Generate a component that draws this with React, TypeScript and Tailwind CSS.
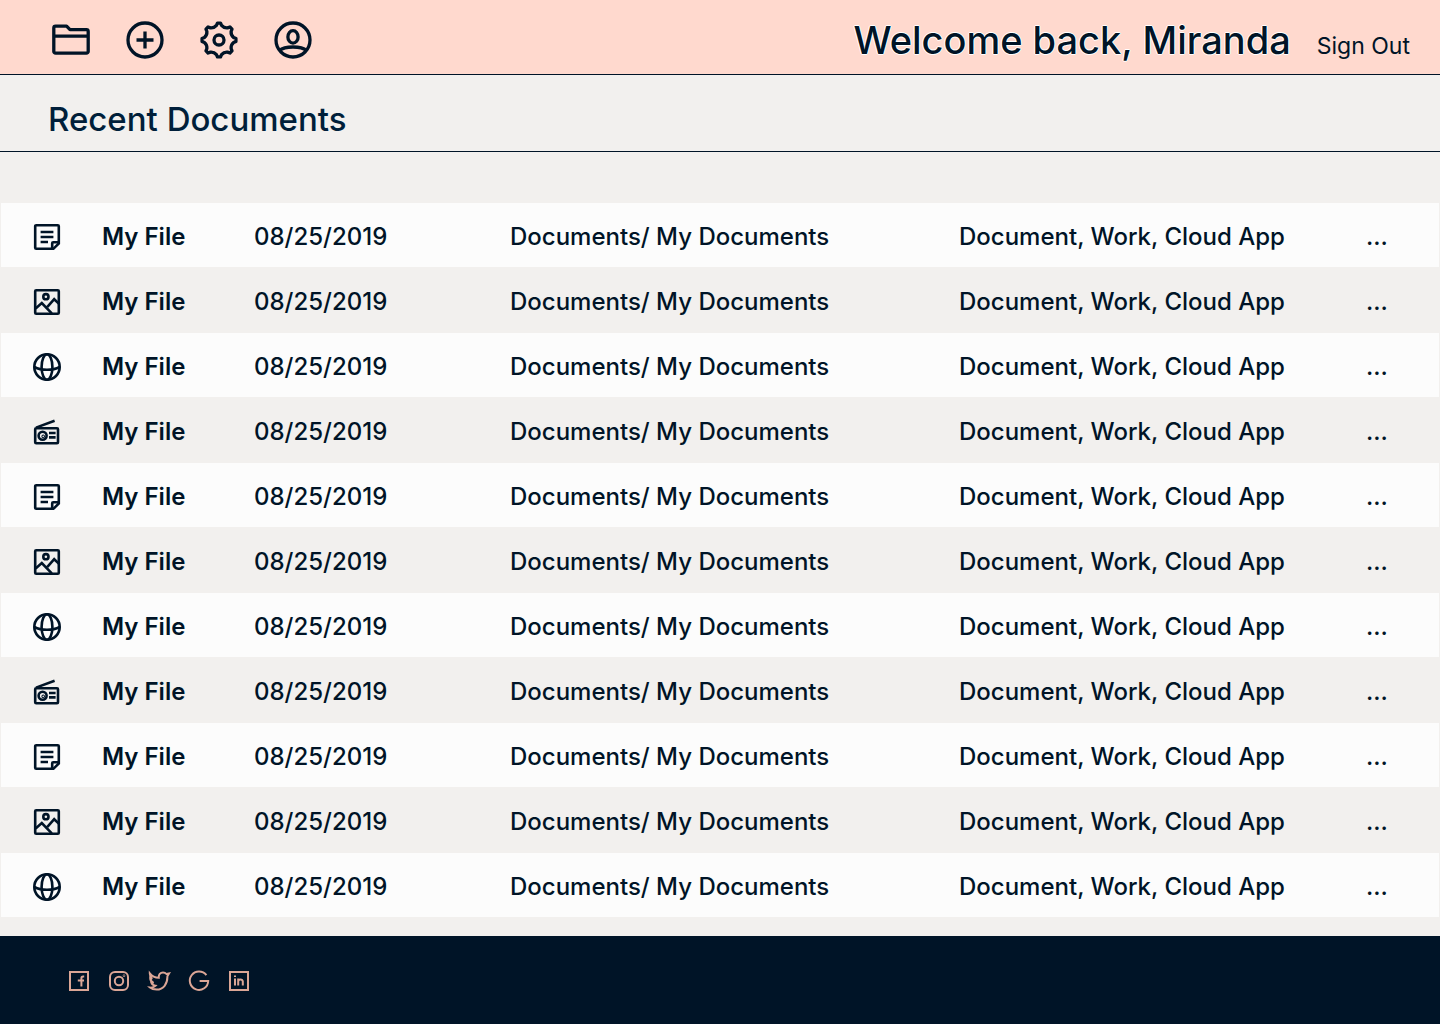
import type { ReactNode } from "react";

type FileKind = "note" | "image" | "web" | "audio";

const kinds: FileKind[] = ["note", "image", "web", "audio"];

const files = Array.from({ length: 11 }, (_, i) => ({
  id: i,
  kind: kinds[i % 4],
  name: "My File",
  date: "08/25/2019",
  location: "Documents/ My Documents",
  tags: "Document, Work, Cloud App",
}));

/* Outline of an eight-toothed cog centred on (20, 20). */
function gearPath() {
  const at = (deg: number, r: number) => {
    const a = (deg * Math.PI) / 180;
    return `${(20 + r * Math.sin(a)).toFixed(2)} ${(20 - r * Math.cos(a)).toFixed(2)}`;
  };
  let d = `M${at(-5, 17)}`;
  for (let i = 0; i < 8; i++) {
    const t = i * 45;
    d += `L${at(t + 5, 17)}L${at(t + 10, 14.8)}Q${at(t + 22.5, 12.8)} ${at(t + 35, 14.8)}L${at(t + 40, 17)}`;
  }
  return d + "Z";
}

function NavIcon({ children }: { children: ReactNode }) {
  return (
    <svg viewBox="0 0 40 40" className="size-10" fill="none" stroke="currentColor" strokeWidth="3.3" strokeLinejoin="round" aria-hidden="true">
      {children}
    </svg>
  );
}

const navItems = [
  {
    label: "Files",
    icon: (
      <NavIcon>
        <path d="M2.8 8a1.8 1.8 0 0 1 1.8-1.8H15.6L19 9.6H35.4A1.8 1.8 0 0 1 37.2 11.4V31.4A1.8 1.8 0 0 1 35.4 33.2H4.6A1.8 1.8 0 0 1 2.8 31.4ZM2.8 16.2H37.2" />
      </NavIcon>
    ),
  },
  {
    label: "New",
    icon: (
      <NavIcon>
        <circle cx="20" cy="20" r="17" />
        <path d="M20 11.5V28.5M11.5 20H28.5" />
      </NavIcon>
    ),
  },
  {
    label: "Settings",
    icon: (
      <NavIcon>
        <path d={gearPath()} />
        <circle cx="20" cy="20" r="5" />
      </NavIcon>
    ),
  },
  {
    label: "Account",
    icon: (
      <NavIcon>
        <circle cx="20" cy="20" r="17" />
        <ellipse cx="20" cy="16.9" rx="5.1" ry="6.2" />
        <path d="M6.6 30.4C9 28.2 13.6 27 20 27S31 28.2 33.4 30.4" />
      </NavIcon>
    ),
  },
];

const fileDrawings: Record<FileKind, ReactNode> = {
  note: (
    <>
      <path d="M3.2 2.2H24.8A1 1 0 0 1 25.8 3.2V20.4L20.4 25.8H3.2A1 1 0 0 1 2.2 24.8V3.2A1 1 0 0 1 3.2 2.2Z" />
      <path d="M19.2 25V20.2A1 1 0 0 1 20.2 19.2H25M7.6 9H20.4M7.6 14H20.4M7.6 19H15" />
    </>
  ),
  image: (
    <>
      <rect x="2.2" y="2.2" width="23.6" height="23.6" rx="1" />
      <circle cx="12.9" cy="8.7" r="2.6" />
      <path d="M2.6 20.4L8.8 15L18.8 25.4M14.4 18.8L21.2 11.2L25.8 15.6" />
    </>
  ),
  web: (
    <>
      <circle cx="14" cy="14" r="12.7" />
      <ellipse cx="14" cy="14" rx="5.4" ry="12.7" />
      <path d="M1.4 14C5 16 9.2 16.8 14 16.8S23 16 26.6 14" />
    </>
  ),
  audio: (
    <>
      <rect x="2.2" y="10.2" width="22.8" height="15" rx="1" />
      <circle cx="9.6" cy="17.8" r="4" />
      <path d="M3 9.6L21.6 2.8M16 15H22.6M16 19.4H22.6" />
      <circle cx="10.2" cy="18.4" r="0.5" />
    </>
  ),
};

const socials = [
  {
    label: "Facebook",
    icon: (
      <>
        <rect x="3" y="3" width="18" height="18" />
        <path d="M17.2 7.4H16.2Q14.4 7.4 14.4 9.2V17.6M10.8 11.6H17" />
      </>
    ),
  },
  {
    label: "Instagram",
    icon: (
      <>
        <rect x="3" y="3" width="18" height="18" rx="5" />
        <circle cx="12" cy="12" r="4.2" />
        <circle cx="17" cy="6.8" r="0.3" />
      </>
    ),
  },
  {
    label: "Twitter",
    icon: (
      <path d="M2.8 4.4C5.2 7.6 8.2 8.8 11.8 8.8C11.4 5.4 13.4 3.4 16 3.4C17.4 3.4 18.6 4 19.4 5L22 4.4L20.4 7.2C20.6 15 16.4 20.6 9.6 20.6C6.8 20.6 4.4 19.8 3 18.6C5.2 18.8 7 18.2 8.4 16.8C6.4 16.6 5 15.6 4.4 13.8H6.6C4.4 12.8 3.2 11.2 3.2 9.2L5.2 9.8C3.4 8.2 2.8 6.6 2.8 4.4Z" />
    ),
  },
  {
    label: "Google",
    icon: <path d="M19.4 6.2A9.2 9.2 0 1 0 21.2 12H12.6" />,
  },
  {
    label: "LinkedIn",
    icon: (
      <>
        <rect x="3" y="3" width="18" height="18" />
        <path d="M8 9.6V16.4M8 6.4V8M11.2 16.4V9.6M11.2 12.4Q11.2 10.4 13.4 10.4T15.8 12.4V16.4" />
      </>
    ),
  },
];

export default function App() {
  return (
    <div className="flex min-h-screen flex-col bg-[#f2f0ee] font-['Inter','Liberation_Sans',sans-serif] text-[#001427]">
      <header className="flex items-start justify-between border-b border-[#001427] bg-[#ffd9ce] pt-5 pr-[30px] pb-[14px] pl-[51px]">
        <nav aria-label="Main" className="flex gap-[34px]">
          {navItems.map((item) => (
            <button key={item.label} type="button" aria-label={item.label} className="block">
              {item.icon}
            </button>
          ))}
        </nav>
        <div className="flex items-baseline gap-[26px]">
          <h1 className="text-[38px] leading-10 font-medium [text-shadow:1px_0_#fff,-1px_0_#fff,0_1px_#fff,0_-1px_#fff]">
            Welcome back, Miranda
          </h1>
          <a href="#sign-out" className="text-[23px] leading-6">
            Sign Out
          </a>
        </div>
      </header>

      <main className="flex-1">
        <h2 className="border-b border-[#001427] pt-[22px] pb-[10px] pl-12 text-[33px] leading-11 font-medium text-[#001f3a]">
          Recent Documents
        </h2>

        <table aria-label="Recent documents" className="mt-[51px] w-full table-fixed border-separate border-spacing-0 text-left text-2xl font-medium">
          <colgroup>
            <col className="w-[102px]" />
            <col className="w-[152px]" />
            <col className="w-[256px]" />
            <col className="w-[449px]" />
            <col />
            <col className="w-[74px]" />
          </colgroup>
          <tbody className="[&_td]:border-b [&_td]:border-[#f2f0ee] [&_td]:pt-1 [&_th]:border-b [&_th]:border-[#f2f0ee] [&_th]:pt-1">
            {files.map((file) => (
              <tr key={file.id} className="h-[65px] odd:bg-[#fcfcfc]">
                <td className="border-l pl-8">
                  <svg viewBox="0 0 28 28" className="size-7" fill="none" stroke="currentColor" strokeWidth="2.6" aria-hidden="true">
                    {fileDrawings[file.kind]}
                  </svg>
                </td>
                <th scope="row" className="font-semibold">
                  {file.name}
                </th>
                <td>{file.date}</td>
                <td>{file.location}</td>
                <td>{file.tags}</td>
                <td className="border-r">
                  <button type="button" aria-label="More actions">
                    ...
                  </button>
                </td>
              </tr>
            ))}
          </tbody>
        </table>
      </main>

      <footer className="flex gap-4 bg-[#001427] pt-[33px] pb-[31px] pl-[67px] text-[#dba696]">
        {socials.map((s) => (
          <a key={s.label} href={`#${s.label.toLowerCase()}`} aria-label={s.label}>
            <svg viewBox="0 0 24 24" className="size-6" fill="none" stroke="currentColor" strokeWidth="2" aria-hidden="true">
              {s.icon}
            </svg>
          </a>
        ))}
      </footer>
    </div>
  );
}
